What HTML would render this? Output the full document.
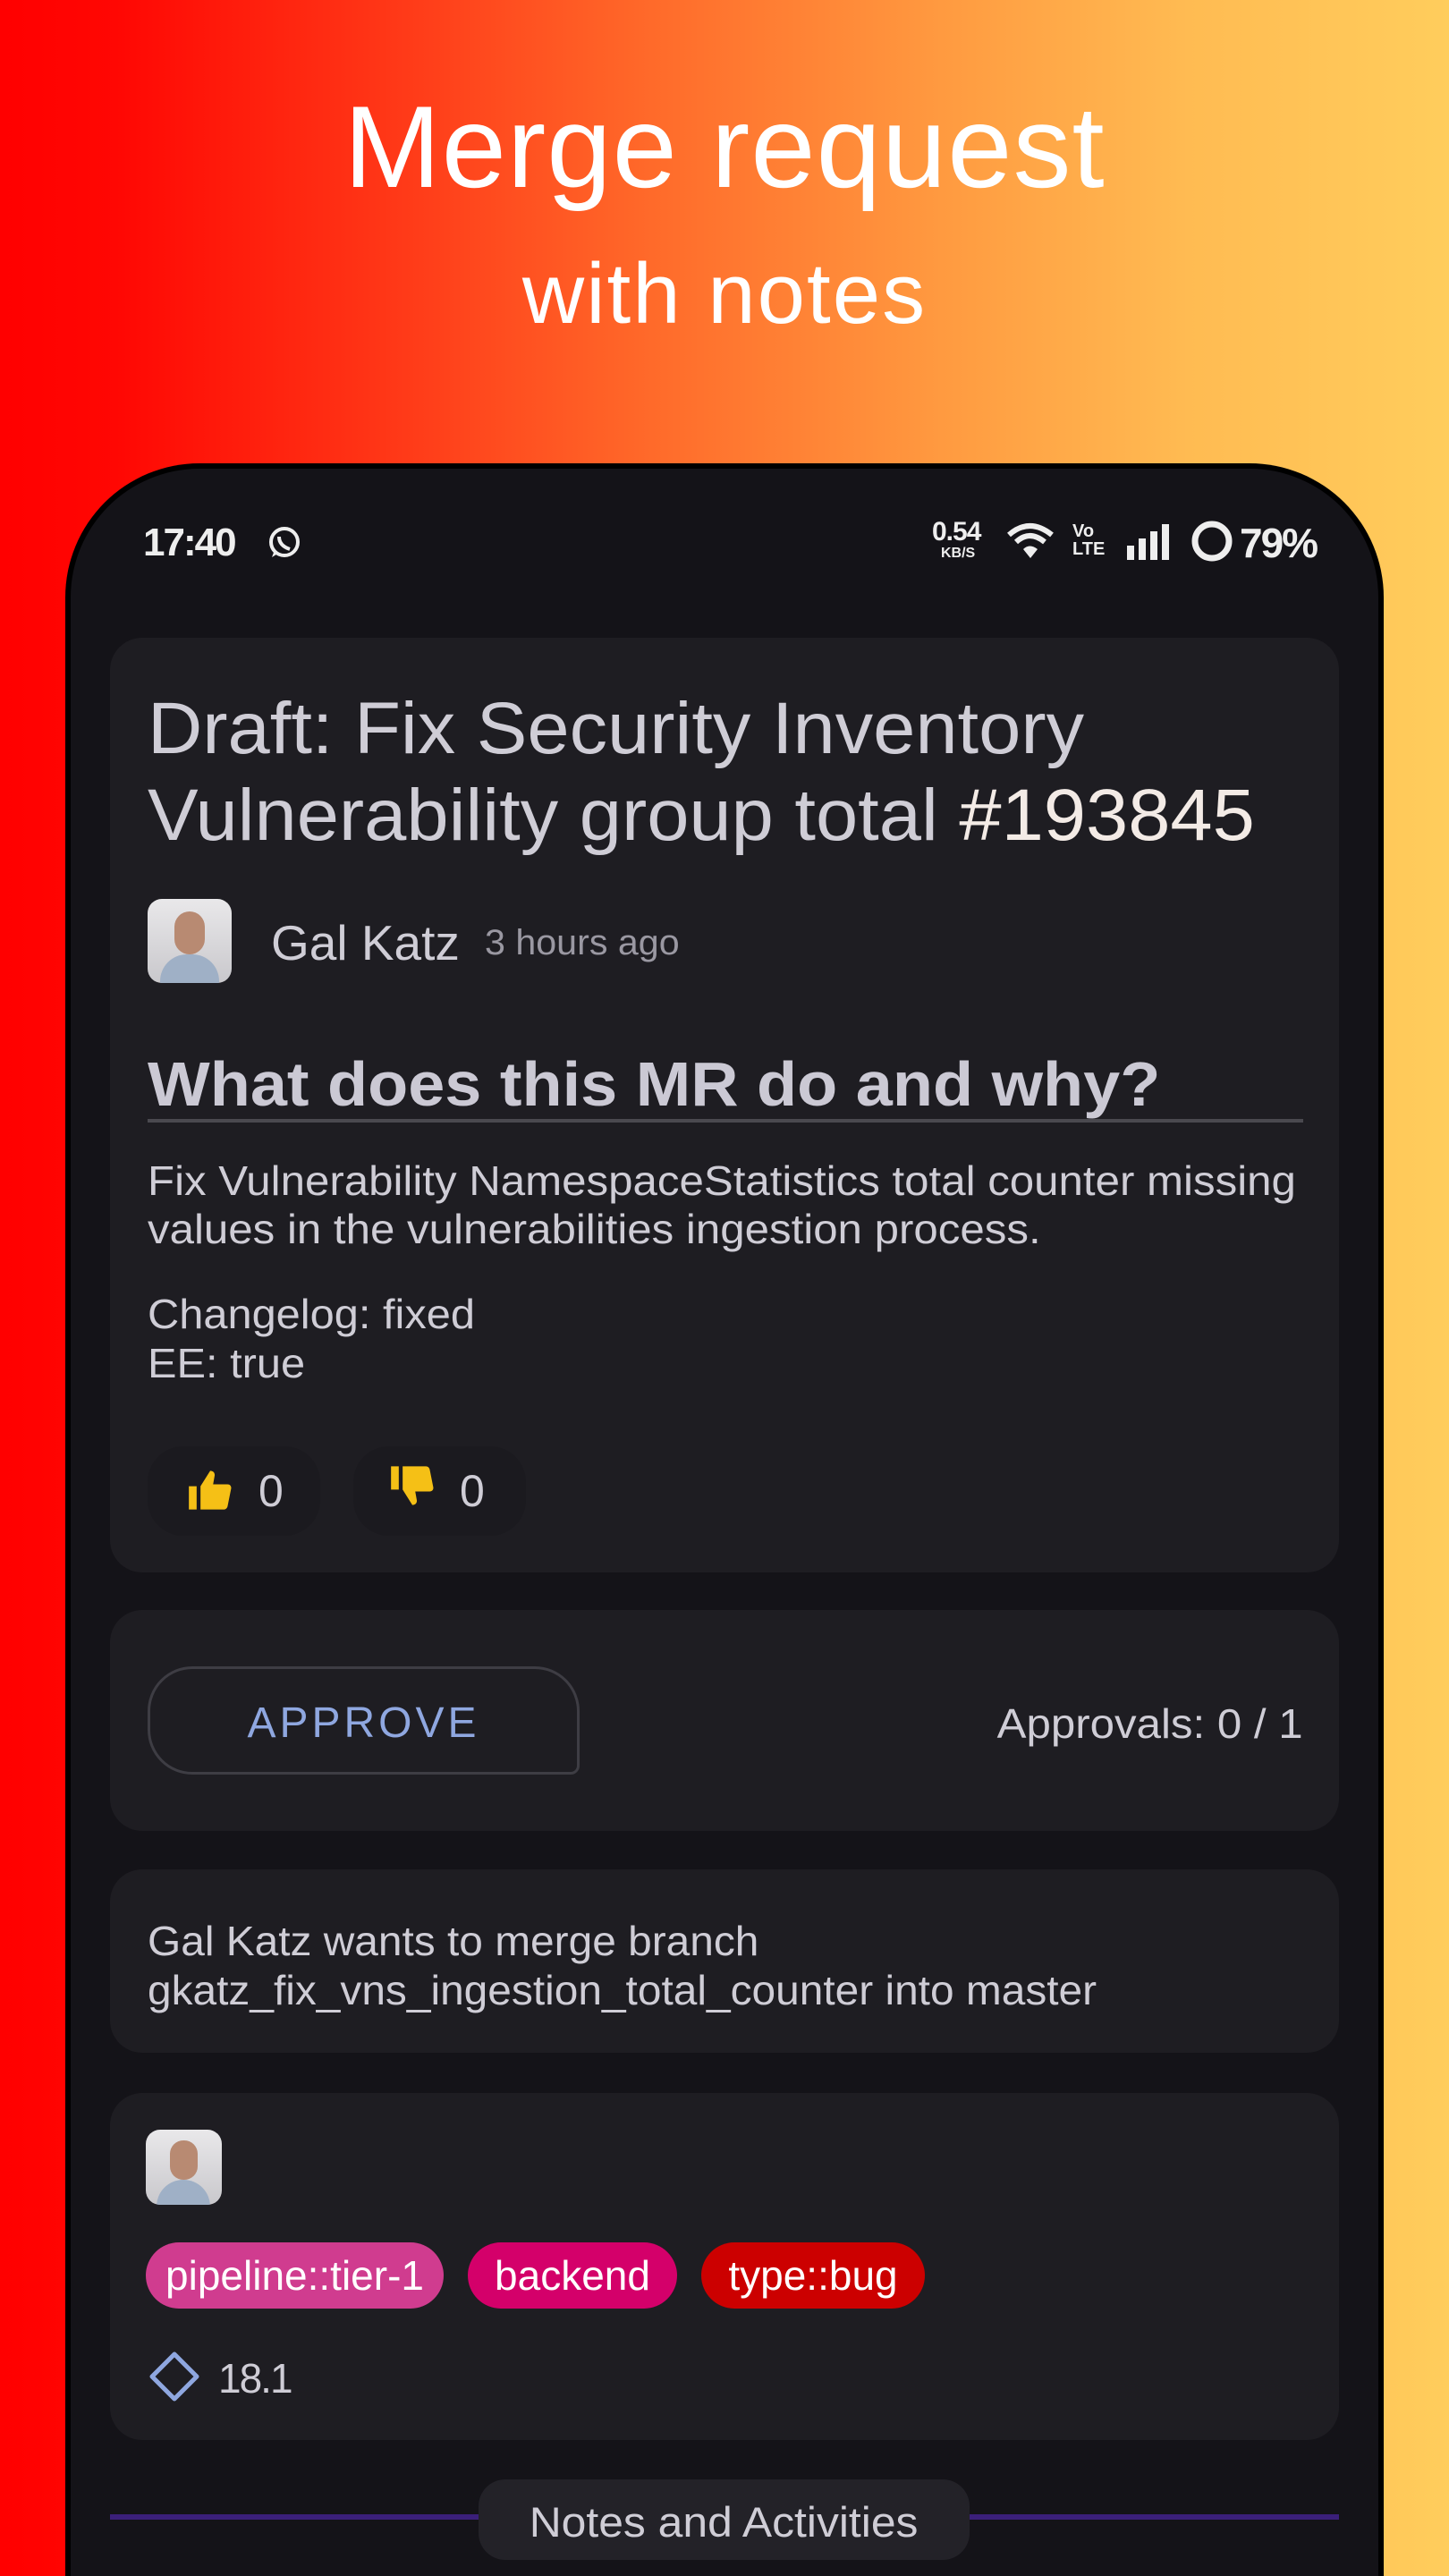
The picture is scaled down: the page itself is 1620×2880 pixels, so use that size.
<!DOCTYPE html>
<html><head><meta charset="utf-8"><style>
*{margin:0;padding:0;box-sizing:border-box}
html,body{width:1620px;height:2880px;overflow:hidden}
body{position:relative;font-family:"Liberation Sans",sans-serif;background:linear-gradient(90deg,#ff0000 0%,#ff0703 8%,#ff3a18 28%,#ff6a2a 45%,#ff9a40 65%,#ffbb52 82%,#ffcd5c 100%)}
.a{position:absolute;white-space:nowrap}
.s{display:inline-block;transform-origin:left center}
.hdr{left:0;width:1620px;text-align:center;color:#fff}
.phone{position:absolute;left:73px;top:518px;width:1474px;height:2362px;background:#141318;border:6px solid #000;border-bottom:none;border-radius:150px 150px 0 0}
.card{position:absolute;left:123px;width:1374px;background:#1e1d22;border-radius:36px}
.t{color:#cfcdd6}
.lbl{position:absolute;top:2507px;height:74px;border-radius:37px;color:#fff;font-size:46px;line-height:74px;text-align:center}
</style></head><body>
<div class="a hdr" style="top:84px;font-size:130px;line-height:160px;letter-spacing:1px">Merge request</div>
<div class="a hdr" style="top:274px;font-size:96px;line-height:110px;letter-spacing:2px">with notes</div>
<div class="phone"></div>
<!-- status bar -->
<div class="a" style="left:160px;top:582px;font-size:44px;font-weight:bold;color:#eee;letter-spacing:-2px">17:40</div>
<svg class="a" style="left:298px;top:587px" width="40" height="40" viewBox="0 0 40 40"><circle cx="20" cy="19" r="15" fill="none" stroke="#eee" stroke-width="4"/><path d="M6 36 L9 28 L14 31Z" fill="#eee"/><path d="M14 13 q0 10 12 14" stroke="#eee" stroke-width="4" fill="none"/></svg>
<div class="a" style="left:1042px;top:580px;font-size:30px;font-weight:bold;color:#eee;line-height:30px;letter-spacing:-1px">0.54</div>
<div class="a" style="left:1052px;top:610px;font-size:16px;font-weight:bold;color:#eee">KB/S</div>
<svg class="a" style="left:1124px;top:584px" width="58" height="44" viewBox="0 0 58 44"><path d="M4 14 Q27 -6 52 14" stroke="#eee" stroke-width="6" fill="none"/><path d="M12 22 Q27 8 44 22" stroke="#eee" stroke-width="6" fill="none"/><path d="M20 30 Q27 23 36 30 L28 40Z" fill="#eee"/></svg>
<div class="a" style="left:1199px;top:584px;font-size:20px;font-weight:bold;color:#eee;line-height:20px">Vo<br>LTE</div>
<svg class="a" style="left:1258px;top:584px" width="54" height="44" viewBox="0 0 54 44"><rect x="2" y="26" width="8" height="16" fill="#eee"/><rect x="15" y="18" width="8" height="24" fill="#eee"/><rect x="28" y="10" width="8" height="32" fill="#eee"/><rect x="41" y="2" width="8" height="40" fill="#eee"/></svg>
<svg class="a" style="left:1330px;top:580px" width="50" height="50"><circle cx="25" cy="25" r="19" fill="none" stroke="#eee" stroke-width="7"/></svg>
<div class="a" style="left:1386px;top:580px;font-size:46px;font-weight:bold;color:#eee;letter-spacing:-2px">79%</div>

<!-- card 1 -->
<div class="card" style="top:713px;height:1045px"></div>
<div class="a t" style="left:165px;top:766px;font-size:82px;line-height:97px"><span class="s" style="transform:scaleX(1.035)">Draft: Fix Security Inventory<br>Vulnerability group total <span style="color:#f3ebe6">#193845</span></span></div>
<div class="a" style="left:165px;top:1005px;width:94px;height:94px;border-radius:16px;background:linear-gradient(#e9e8ea,#c9c8cc);overflow:hidden"><div style="position:absolute;left:30px;top:14px;width:34px;height:48px;border-radius:17px;background:#b88a72"></div><div style="position:absolute;left:14px;top:62px;width:66px;height:40px;border-radius:30px 30px 0 0;background:#9fb0c6"></div></div>
<div class="a t" style="left:303px;top:1022px;font-size:55px">Gal Katz</div>
<div class="a" style="left:542px;top:1032px;font-size:40px;color:#9a98a2"><span class="s" style="transform:scaleX(1.03)">3 hours ago</span></div>
<div class="a t" style="left:165px;top:1172px;font-size:70px;font-weight:bold;color:#cbc9d4"><span class="s" style="transform:scaleX(1.055)">What does this MR do and why?</span></div>
<div class="a" style="left:165px;top:1251px;width:1292px;height:4px;background:#4a494f"></div>
<div class="a t" style="left:165px;top:1293px;font-size:46px;line-height:54px"><span class="s" style="transform:scaleX(1.07)">Fix Vulnerability NamespaceStatistics total counter missing<br>values in the vulnerabilities ingestion process.</span></div>
<div class="a t" style="left:165px;top:1442px;font-size:46px;line-height:55px"><span class="s" style="transform:scaleX(1.06)">Changelog: fixed<br>EE: true</span></div>
<div class="a" style="left:165px;top:1617px;width:193px;height:100px;border-radius:40px;background:#1b1a1f"></div>
<div class="a" style="left:395px;top:1617px;width:193px;height:100px;border-radius:40px;background:#1b1a1f"></div>
<svg class="a" style="left:209px;top:1640px" width="52" height="52" viewBox="0 0 24 24"><path d="M1 10h4v12H1zM7 22V10l5-8c1.5 0 2.5 1 2.3 2.5L13.5 9H21c1.2 0 2 1 1.8 2.2l-1.8 9C20.8 21.3 20 22 19 22z" fill="#f5c016"/></svg>
<div class="a t" style="left:289px;top:1638px;font-size:50px">0</div>
<svg class="a" style="left:435px;top:1635px" width="52" height="52" viewBox="0 0 24 24"><path d="M1 2h4v12H1zM7 2v12l5 8c1.5 0 2.5-1 2.3-2.5L13.5 15H21c1.2 0 2-1 1.8-2.2l-1.8-9C20.8 2.7 20 2 19 2z" fill="#f5c016"/></svg>
<div class="a t" style="left:514px;top:1638px;font-size:50px">0</div>

<!-- card 2 -->
<div class="card" style="top:1800px;height:247px"></div>
<div class="a" style="left:165px;top:1863px;width:483px;height:121px;border:3px solid #3e3d44;border-radius:50px 50px 10px 50px"></div>
<div class="a" style="left:165px;top:1899px;width:483px;text-align:center;font-size:48px;color:#8fa7e0;letter-spacing:4px">APPROVE</div>
<div class="a t" style="right:163px;top:1900px;font-size:46px"><span class="s" style="transform:scaleX(1.07);transform-origin:right center">Approvals: 0 / 1</span></div>

<!-- card 3 -->
<div class="card" style="top:2090px;height:205px"></div>
<div class="a t" style="left:165px;top:2143px;font-size:46px;line-height:55px"><span class="s" style="transform:scaleX(1.04)">Gal Katz wants to merge branch<br>gkatz_fix_vns_ingestion_total_counter into master</span></div>

<!-- card 4 -->
<div class="card" style="top:2340px;height:388px"></div>
<div class="a" style="left:163px;top:2381px;width:85px;height:84px;border-radius:16px;background:linear-gradient(#e9e8ea,#c9c8cc);overflow:hidden"><div style="position:absolute;left:27px;top:12px;width:31px;height:44px;border-radius:15px;background:#b88a72"></div><div style="position:absolute;left:12px;top:56px;width:60px;height:36px;border-radius:30px 30px 0 0;background:#9fb0c6"></div></div>
<div class="lbl" style="left:163px;width:333px;background:#d03c8f">pipeline::tier-1</div>
<div class="lbl" style="left:523px;width:234px;background:#d4006a">backend</div>
<div class="lbl" style="left:784px;width:250px;background:#cc0000">type::bug</div>
<svg class="a" style="left:166px;top:2628px" width="58" height="58" viewBox="0 0 58 58"><path d="M29 4 L54 29 L29 54 L4 29Z" fill="none" stroke="#8fa7e0" stroke-width="5" stroke-linejoin="round"/></svg>
<div class="a t" style="left:244px;top:2632px;font-size:46px;letter-spacing:-2px">18.1</div>

<!-- notes -->
<div class="a" style="left:123px;top:2811px;width:1374px;height:6px;background:#3b1f7a"></div>
<div class="a" style="left:535px;top:2772px;width:549px;height:90px;border-radius:30px;background:#232228"></div>
<div class="a t" style="left:535px;top:2792px;width:549px;text-align:center;font-size:47px"><span class="s" style="transform:scaleX(1.06);transform-origin:center">Notes and Activities</span></div>
</body></html>
